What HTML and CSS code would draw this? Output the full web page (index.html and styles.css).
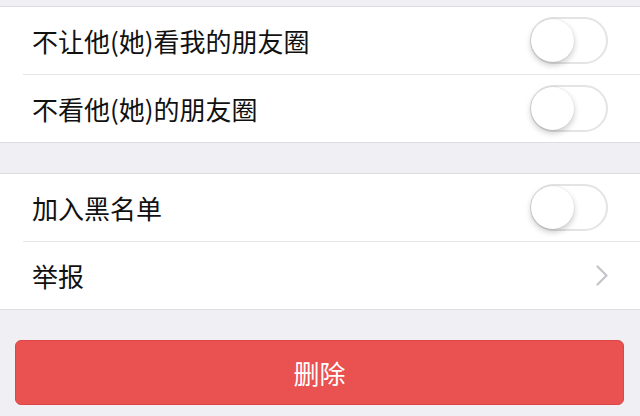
FILE: index.html
```html
<!DOCTYPE html>
<html>
<head>
<meta charset="utf-8">
<link rel="stylesheet" href="styles.css">
</head>
<body>
<div class="page">
  <div class="group">
    <div class="row">
      <span class="label">不让他(她)看我的朋友圈</span>
      <span class="switch"><span class="knob"></span></span>
    </div>
    <div class="row">
      <span class="label">不看他(她)的朋友圈</span>
      <span class="switch"><span class="knob"></span></span>
    </div>
  </div>
  <div class="group">
    <div class="row">
      <span class="label">加入黑名单</span>
      <span class="switch"><span class="knob"></span></span>
    </div>
    <div class="row">
      <span class="label">举报</span>
      <svg class="chevron" width="12" height="21" viewBox="0 0 12 21"><polyline points="1.5,1.5 10.5,10.5 1.5,19.5" fill="none" stroke="#c4c4c9" stroke-width="2.2" stroke-linecap="round" stroke-linejoin="round"/></svg>
    </div>
  </div>
  <div class="actions">
    <button class="danger">删除</button>
  </div>
</div>
</body>
</html>
```
FILE: styles.css
```css
html, body {
  margin: 0;
  padding: 0;
  background: #efeff4;
  font-family: "Noto Sans CJK SC", "Noto Sans", sans-serif;
}
.page {
  width: 640px;
  height: 416px;
  overflow: hidden;
  padding-top: 6px;
  box-sizing: border-box;
}
.group {
  background: #fff;
  border-top: 1px solid #dedee2;
  border-bottom: 1px solid #dedee2;
  margin-bottom: 30px;
  display: flex;
  flex-direction: column;
  gap: 1px;
}
.row {
  height: 67px;
  display: flex;
  align-items: center;
  justify-content: space-between;
  padding: 0 32px;
  position: relative;
}
.row:first-child::after {
  content: "";
  position: absolute;
  left: 23px;
  right: 0;
  bottom: -1px;
  height: 1px;
  background: #e6e6e8;
}
.label {
  font-size: 26px;
  color: #111;
  line-height: 1;
}
.switch {
  width: 78px;
  height: 47px;
  box-sizing: border-box;
  border: 2px solid #e4e4e6;
  border-radius: 24px;
  position: relative;
  background: #fff;
}
.knob {
  position: absolute;
  left: -1px;
  top: 0;
  width: 43px;
  height: 43px;
  border-radius: 50%;
  background: #fff;
  box-shadow: 0 3px 6px rgba(0,0,0,0.22), 0 0 0 0.5px rgba(0,0,0,0.06);
}
.chevron {
  display: block;
}
.actions {
  padding: 0 16px 0 15px;
}
.danger {
  display: block;
  width: 100%;
  height: 65px;
  border: 1px solid #dc4647;
  border-radius: 6px;
  background: #ea5151;
  color: #fff;
  font-family: "Noto Sans CJK SC", "Noto Sans", sans-serif;
  font-size: 26px;
  padding: 0;
}
```
